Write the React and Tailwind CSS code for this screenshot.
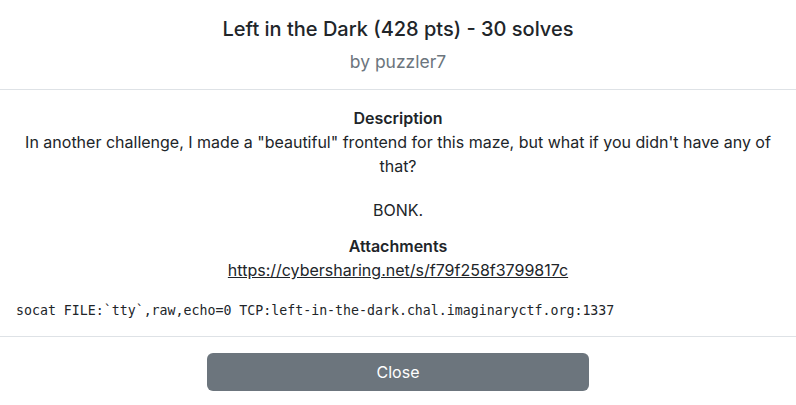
import React from 'react';

export default function App() {
  return (
    <div className="w-[796px] h-[405px] bg-white text-[#212529] font-['Inter',sans-serif] overflow-hidden">
      <div className="flex flex-col items-center pt-[16px] pb-[14px] border-b border-[#dee2e6]">
        <h1 className="text-[20px] leading-[26px] font-medium">Left in the Dark (428 pts) - 30 solves</h1>
        <h2 className="text-[17.5px] leading-[26px] mt-[7px] text-[#6c757d]">by puzzler7</h2>
      </div>
      <div className="px-4 pt-[16px] pb-[15px] border-b border-[#dee2e6] text-center text-[16px] leading-[24px]">
        <div className="font-semibold">Description</div>
        <p>In another challenge, I made a "beautiful" frontend for this maze, but what if you didn't have any of that?</p>
        <p className="mt-[20px]">BONK.</p>
        <div className="font-semibold mt-[12px]">Attachments</div>
        <a className="underline" href="#">https://cybersharing.net/s/f79f258f3799817c</a>
        <pre className="text-left mt-[19px] font-['DejaVu_Sans_Mono',monospace] text-[13.25px] leading-[20px]">
          socat FILE:`tty`,raw,echo=0 TCP:left-in-the-dark.chal.imaginaryctf.org:1337
        </pre>
      </div>
      <div className="flex justify-center pt-[16px]">
        <button className="w-[382px] h-[38px] rounded-md bg-[#6c757d] text-white text-[16px]">Close</button>
      </div>
    </div>
  );
}
